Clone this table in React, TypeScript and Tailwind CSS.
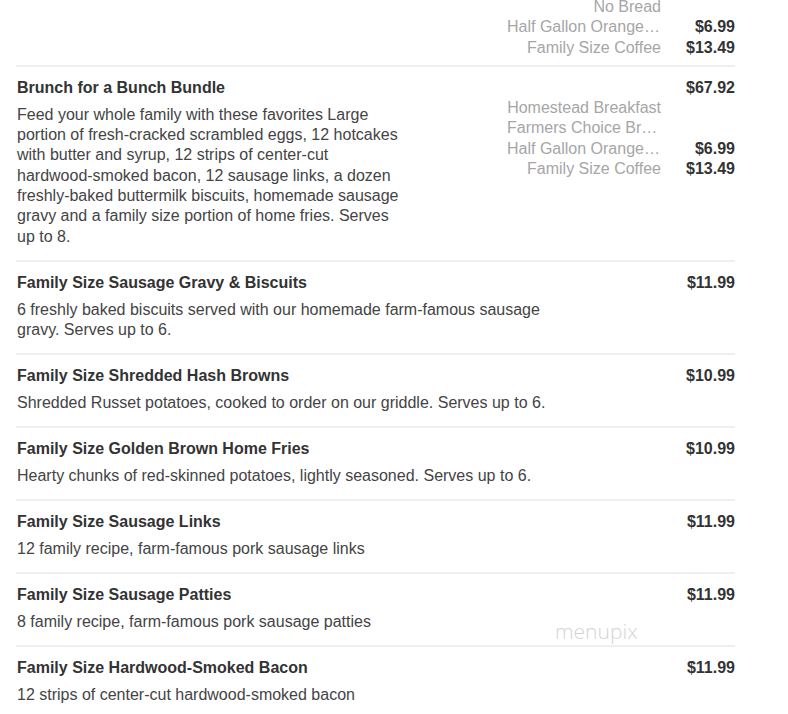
import { JSX } from 'react'

type Option = { name: string; price?: string }

type Item = {
  title?: string
  price?: string
  description?: string
  options?: Option[]
}

const items: Item[] = [
  {
    title: 'Brunch for a Bunch Bundle',
    price: '$67.92',
    description:
      'Feed your whole family with these favorites Large portion of fresh-cracked scrambled eggs, 12 hotcakes with butter and syrup, 12 strips of center-cut hardwood-smoked bacon, 12 sausage links, a dozen freshly-baked buttermilk biscuits, homemade sausage gravy and a family size portion of home fries. Serves up to 8.',
    options: [
      { name: 'Homestead Breakfast' },
      { name: 'Farmers Choice Breakfast' },
      { name: 'Half Gallon Orange Juice', price: '$6.99' },
      { name: 'Family Size Coffee', price: '$13.49' },
    ],
  },
  {
    title: 'Family Size Sausage Gravy & Biscuits',
    price: '$11.99',
    description: '6 freshly baked biscuits served with our homemade farm-famous sausage gravy. Serves up to 6.',
  },
  {
    title: 'Family Size Shredded Hash Browns',
    price: '$10.99',
    description: 'Shredded Russet potatoes, cooked to order on our griddle. Serves up to 6.',
  },
  {
    title: 'Family Size Golden Brown Home Fries',
    price: '$10.99',
    description: 'Hearty chunks of red-skinned potatoes, lightly seasoned. Serves up to 6.',
  },
  {
    title: 'Family Size Sausage Links',
    price: '$11.99',
    description: '12 family recipe, farm-famous pork sausage links',
  },
  {
    title: 'Family Size Sausage Patties',
    price: '$11.99',
    description: '8 family recipe, farm-famous pork sausage patties',
  },
  {
    title: 'Family Size Hardwood-Smoked Bacon',
    price: '$11.99',
    description: '12 strips of center-cut hardwood-smoked bacon',
  },
]

function OptionRow({ option }: { option: Option }): JSX.Element {
  return (
    <div className="flex items-center gap-[10px] h-[20.3px]">
      <p className="w-[154px] text-right truncate text-[#a6a6a6]">{option.name}</p>
      <p className="w-[64px] text-right font-bold text-[#333333]">{option.price ?? ''}</p>
    </div>
  )
}

function MenuItem({ item }: { item: Item }): JSX.Element {
  return (
    <div className="flex justify-between gap-[104px] pt-[11px] pb-[12.7px] border-b-2 border-[#efefef]">
      <div className="flex-1 pl-px">
        <h3 className="font-bold text-[#333333] leading-5">{item.title}</h3>
        <p className="mt-[7px] leading-[20.3px] text-[#444444]">{item.description}</p>
      </div>

      <div className="flex flex-col items-end">
        <p className="font-bold text-[#333333] leading-5 h-5">{item.price}</p>
        {item.options?.map((option) => <OptionRow key={option.name} option={option} />)}
      </div>
    </div>
  )
}

export default function App(): JSX.Element {
  const topOptions: Option[] = [
    { name: 'No Bread' },
    { name: 'Half Gallon Orange Juice', price: '$6.99' },
    { name: 'Family Size Coffee', price: '$13.49' },
  ]

  return (
    <div
      className="relative bg-white w-[788px] h-[714px] overflow-hidden pl-4 pr-[53px] text-[16px]"
      style={{ fontFamily: '"Liberation Sans", Arial, sans-serif' }}
    >
      <div className="flex flex-col items-end -mt-[3px] pb-[7px] border-b-2 border-[#efefef]">
        {topOptions.map((option) => (
          <OptionRow key={option.name} option={option} />
        ))}
      </div>

      {items.map((item) => (
        <MenuItem key={item.title} item={item} />
      ))}

      <span
        className="absolute left-[555px] top-[616px] text-[21px] font-light text-[#d4d4d4]"
        style={{ fontFamily: '"Open Sans", sans-serif' }}
      >
        menupix
      </span>
    </div>
  )
}
